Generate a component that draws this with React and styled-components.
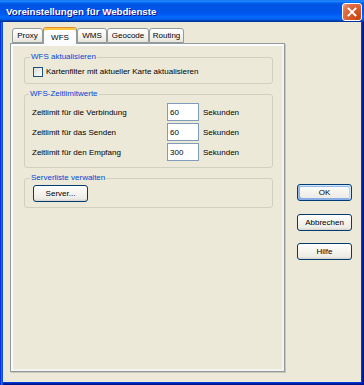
import React from "react";
import styled, { createGlobalStyle } from "styled-components";

const Global = createGlobalStyle`
  html, body { margin: 0; padding: 0; width: 364px; height: 385px; overflow: hidden; background: #fff; }
  * { box-sizing: border-box; }
`;

const FONT = `"Liberation Sans", Arial, sans-serif`;

const Window = styled.div`
  width: 364px;
  height: 385px;
  display: flex;
  flex-direction: column;
  font-family: ${FONT};
  font-size: 8px;
  color: #000;
`;

const TitleBar = styled.div`
  height: 22px;
  flex: none;
  display: flex;
  align-items: center;
  justify-content: space-between;
  padding: 0 2px 0 6px;
  background: linear-gradient(180deg, #0058ee 0%, #3593ff 4%, #288eff 6%, #127dff 8%, #036ffc 10%, #0262ee 14%, #0057e5 20%, #0054e3 24%, #0055eb 56%, #005bf5 66%, #026afe 76%, #0062ef 86%, #0052d6 92%, #0040ab 94%, #003092 100%);
`;

const Title = styled.span`
  color: #fff;
  font-weight: bold;
  font-size: 9.7px;
  text-shadow: 1px 1px #0f1089;
  margin-top: 1px;
`;

const CloseButton = styled.div`
  width: 20px;
  height: 18px;
  border: 1px solid #fff;
  border-radius: 3px;
  background: radial-gradient(circle at 85% 85%, #c94512 0%, #d75a2c 45%, #e0714a 75%, #f2a98c 100%);
  display: flex;
  align-items: center;
  justify-content: center;
  margin-top: 1px;
`;

const Frame = styled.div`
  flex: 1;
  display: flex;
  background: #ece9d8;
  padding: 5px 12px 13px 10px;
  box-shadow: inset 1px 0 #0831d9, inset 2px 0 #166aee, inset 3px 0 #0855dd,
    inset -1px -1px #00138c, inset -2px -2px #001ea0, inset -3px -3px #003bda;
`;

const TabControl = styled.div`
  width: 276px;
  display: flex;
  flex-direction: column;
`;

const TabStrip = styled.div`
  height: 16px;
  display: flex;
  align-items: flex-end;
  padding-left: 2px;
  position: relative;
  z-index: 1;
`;

const Tab = styled.div`
  width: ${(p) => p.$w}px;
  height: ${(p) => (p.$active ? 17 : 15)}px;
  margin-bottom: ${(p) => (p.$active ? -1 : 0)}px;
  border: 1px solid #919b9c;
  border-bottom: ${(p) => (p.$active ? "none" : "1px solid #919b9c")};
  border-top-color: ${(p) => (p.$active ? "#e68b2c" : "#919b9c")};
  border-radius: 3px 3px 0 0;
  background: ${(p) =>
    p.$active ? "#fcfcfe" : "linear-gradient(180deg, #ffffff 0%, #f4f3ee 60%, #e6e4da 100%)"};
  box-shadow: ${(p) => (p.$active ? "inset 0 2px #ffc73c" : "none")};
  display: flex;
  align-items: center;
  justify-content: center;
  padding-top: ${(p) => (p.$active ? 2 : 0)}px;
`;

const Panel = styled.div`
  flex: 1;
  background: #ece9d8;
  border: 1px solid #919b9c;
  box-shadow: inset 2px 2px #fcfcfe, inset -2px -2px #f4f3ee, 1px 1px 0 #c8c6bc;
  padding: 8px 11px 0 13px;
  display: flex;
  flex-direction: column;
  gap: 5px;
`;

const Group = styled.fieldset`
  margin: 0;
  min-width: 0;
  border: 1px solid #d0d0bf;
  border-radius: 3px;
  padding: ${(p) => p.$pad};
`;

const Legend = styled.legend`
  color: #0046d5;
  line-height: 10px;
  padding: 0 1px;
  margin-left: -3px;
`;

const CheckRow = styled.label`
  display: flex;
  align-items: center;
  gap: 3px;
  height: 13px;
`;

const CheckBox = styled.span`
  width: 10px;
  height: 10px;
  border: 1px solid #1c5180;
  background: linear-gradient(135deg, #dcdcd7 0%, #fbfbf9 100%);
`;

const LimitGrid = styled.div`
  display: grid;
  grid-template-columns: 135px 32px auto;
  grid-auto-rows: 18px;
  row-gap: 2px;
  align-items: center;
`;

const Field = styled.div`
  width: 32px;
  height: 18px;
  border: 1px solid #7f9db9;
  background: #fff;
  display: flex;
  align-items: center;
  padding-left: 2px;
`;

const Unit = styled.span`
  margin-left: 4px;
`;

const Button = styled.div`
  width: 55px;
  height: 17px;
  border: 1px solid #003c74;
  border-radius: 3px;
  background: linear-gradient(180deg, #ffffff 0%, #f6f5f0 40%, #ecebe6 86%, #d6d0c5 100%);
  display: flex;
  align-items: center;
  justify-content: center;
  box-shadow: ${(p) =>
    p.$default
      ? "inset -1px 1px #cee7ff, inset 1px 2px #98b8ea, inset -2px 2px #bcd4f6, inset 1px -1px #89ade4, inset 2px -2px #89ade4"
      : "none"};
`;

const ButtonColumn = styled.div`
  margin-left: 12px;
  margin-top: 157px;
  display: flex;
  flex-direction: column;
  gap: 12.5px;
`;

const tabs = [
  { label: "Proxy", w: 31 },
  { label: "WFS", w: 34, active: true },
  { label: "WMS", w: 30 },
  { label: "Geocode", w: 42 },
  { label: "Routing", w: 35 },
];

const limits = [
  ["Zeitlimit für die Verbindung", "60"],
  ["Zeitlimit für das Senden", "60"],
  ["Zeitlimit für den Empfang", "300"],
];

export default function App() {
  return (
    <>
      <Global />
      <Window>
        <TitleBar>
          <Title>Voreinstellungen für Webdienste</Title>
          <CloseButton>
            <svg width="10" height="10" viewBox="0 0 10 10">
              <path d="M1.5 1.5 L8.5 8.5 M8.5 1.5 L1.5 8.5" stroke="#fff" strokeWidth="1.9" strokeLinecap="square" />
            </svg>
          </CloseButton>
        </TitleBar>
        <Frame>
          <TabControl>
            <TabStrip>
              {tabs.map((t) => (
                <Tab key={t.label} $w={t.w} $active={t.active}>
                  {t.label}
                </Tab>
              ))}
            </TabStrip>
            <Panel>
              <Group $pad="3px 8px 5px">
                <Legend>WFS aktualisieren</Legend>
                <CheckRow>
                  <CheckBox />
                  Kartenfilter mit aktueller Karte aktualisieren
                </CheckRow>
              </Group>
              <Group $pad="4px 7px 6px">
                <Legend>WFS-Zeitlimitwerte</Legend>
                <LimitGrid>
                  {limits.map(([label, value]) => (
                    <React.Fragment key={label}>
                      <span>{label}</span>
                      <Field>{value}</Field>
                      <Unit>Sekunden</Unit>
                    </React.Fragment>
                  ))}
                </LimitGrid>
              </Group>
              <Group $pad="2px 8px 5px">
                <Legend>Serverliste verwalten</Legend>
                <Button>Server...</Button>
              </Group>
            </Panel>
          </TabControl>
          <ButtonColumn>
            <Button $default>OK</Button>
            <Button>Abbrechen</Button>
            <Button>Hilfe</Button>
          </ButtonColumn>
        </Frame>
      </Window>
    </>
  );
}
